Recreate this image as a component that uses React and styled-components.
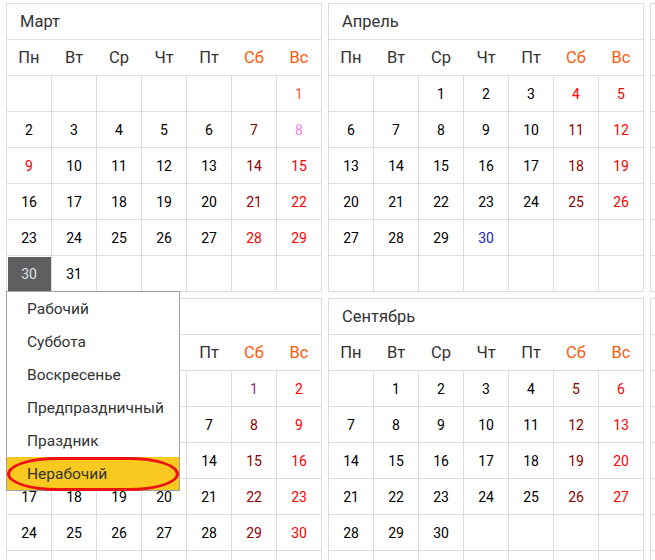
import React from "react";
import styled, { createGlobalStyle } from "styled-components";

const Global = createGlobalStyle`
  html, body { margin: 0; padding: 0; overflow: hidden; background: #fff; }
  body { font-family: Roboto, "Liberation Sans", Arial, sans-serif; }
`;

const Page = styled.div`
  width: 655px;
  height: 560px;
  overflow: hidden;
  padding: 3px 0 0 6px;
  box-sizing: border-box;
`;

const Grid = styled.div`
  display: grid;
  grid-template-columns: repeat(3, 316px);
  gap: 6px;
  width: max-content;
`;

const Panel = styled.div`
  width: 316px;
  border: 1px solid #dcdcdc;
  box-sizing: border-box;
  background: #fff;
`;

const Title = styled.div`
  height: 35px;
  display: flex;
  align-items: center;
  padding-left: 13px;
  font-size: 16.5px;
  color: #333;
`;

const WeekRow = styled.div`
  display: grid;
  grid-template-columns: repeat(7, 44px);
  column-gap: 1px;
  height: 35px;
  border-top: 1px solid #dcdcdc;
`;

const WeekDay = styled.div`
  display: flex;
  align-items: center;
  justify-content: center;
  font-size: 16.5px;
  color: ${(p) => (p.$weekend ? "#ff5a0a" : "#333")};
`;

const DaysGrid = styled.div`
  display: grid;
  grid-template-columns: repeat(7, 44px);
  grid-auto-rows: 35px;
  gap: 1px;
  background: #dcdcdc;
  border-top: 1px solid #dcdcdc;
`;

const Cell = styled.div`
  position: relative;
  display: flex;
  align-items: center;
  justify-content: center;
  font-size: 14px;
  background: ${(p) => (p.$selected ? "#5f5f5f" : "#fff")};
  box-shadow: ${(p) => (p.$selected ? "inset 1px 1px 0 #fff" : "none")};
  color: ${(p) => p.$color};
`;

const Menu = styled.div`
  position: absolute;
  top: 35px;
  left: -1px;
  width: 174px;
  box-sizing: border-box;
  border: 1px solid #a0a0a0;
  background: #fff;
  z-index: 10;
  text-align: left;
`;

const MenuItem = styled.div`
  position: relative;
  height: 33px;
  display: flex;
  align-items: center;
  padding-left: 20px;
  font-size: 15.5px;
  color: #333;
  background: ${(p) => (p.$active ? "#f9c91f" : "transparent")};
`;

const Marker = styled.div`
  position: absolute;
  left: 0px;
  right: 0px;
  top: 0px;
  bottom: -1px;
  border: 3.5px solid #ee1111;
  border-radius: 50px / 17px;
  pointer-events: none;
`;

const RED = "#ff0000";
const DARK = "#8b0000";

const months = [
  { name: "Март", m: 2, special: { 1: "#ff5a46", 8: "#f080f0", 9: RED, 28: RED } },
  { name: "Апрель", m: 3, special: { 4: RED, 30: "#2222c8" } },
  { name: "Май", m: 4, special: {} },
  { name: "Август", m: 7, special: { 1: "#8a2a8a" } },
  { name: "Сентябрь", m: 8, special: {} },
  { name: "Октябрь", m: 9, special: {} },
];

const weekDays = ["Пн", "Вт", "Ср", "Чт", "Пт", "Сб", "Вс"];
const menuItems = ["Рабочий", "Суббота", "Воскресенье", "Предпраздничный", "Праздник", "Нерабочий"];

function buildCells(m) {
  const first = new Date(2015, m, 1).getDay();
  const offset = (first + 6) % 7;
  const total = new Date(2015, m + 1, 0).getDate();
  const cells = [];
  for (let i = 0; i < 42; i++) {
    const d = i - offset + 1;
    cells.push(d >= 1 && d <= total ? d : null);
  }
  return cells;
}

function Month({ data, withMenu }) {
  const cells = buildCells(data.m);
  return (
    <Panel>
      <Title>{data.name}</Title>
      <WeekRow>
        {weekDays.map((w, i) => (
          <WeekDay key={w} $weekend={i >= 5}>{w}</WeekDay>
        ))}
      </WeekRow>
      <DaysGrid>
        {cells.map((d, i) => {
          const col = i % 7;
          let color = "#000";
          if (col === 5) color = DARK;
          if (col === 6) color = RED;
          if (d && data.special[d]) color = data.special[d];
          const selected = withMenu && d === 30;
          return (
            <Cell key={i} $color={selected ? "#dde3ea" : color} $selected={selected}>
              {d || ""}
              {selected && (
                <Menu>
                  {menuItems.map((t, k) => (
                    <MenuItem key={t} $active={k === menuItems.length - 1}>
                      {t}
                      {k === menuItems.length - 1 && <Marker />}
                    </MenuItem>
                  ))}
                </Menu>
              )}
            </Cell>
          );
        })}
      </DaysGrid>
    </Panel>
  );
}

export default function App() {
  return (
    <>
      <Global />
      <Page>
        <Grid>
          {months.map((mo, i) => (
            <Month key={mo.name} data={mo} withMenu={i === 0} />
          ))}
        </Grid>
      </Page>
    </>
  );
}
